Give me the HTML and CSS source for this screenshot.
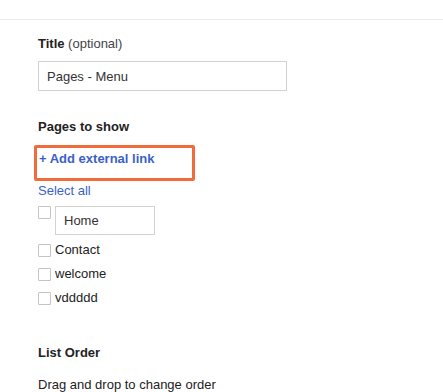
FILE: index.html
```html
<!DOCTYPE html>
<html lang="en">
<head>
    <meta charset="UTF-8">
    <meta name="viewport" content="width=device-width, initial-scale=1.0">
    <title>Pages - Configure</title>
    <link rel="stylesheet" href="styles.css">
</head>
<body>
    <div class="topbar"></div>
    <div class="content">
        <div class="field-label"><b>Title</b> (optional)</div>
        <input type="text" class="title-input" value="Pages - Menu">

        <div class="section-title">Pages to show</div>
        <div class="add-link-box">
            <a href="#" class="add-link">+ Add external link</a>
        </div>
        <a href="#" class="select-all">Select all</a>

        <div class="page-list">
            <div class="page-row page-row-edit">
                <input type="checkbox" class="check">
                <input type="text" class="page-input" value="Home">
            </div>
            <label class="page-row"><input type="checkbox" class="check">Contact</label>
            <label class="page-row"><input type="checkbox" class="check">welcome</label>
            <label class="page-row"><input type="checkbox" class="check">vddddd</label>
        </div>

        <div class="section-title list-order">List Order</div>
        <div class="hint">Drag and drop to change order</div>
    </div>
</body>
</html>
```

FILE: styles.css
```css
:root {
    --text-color: #222;
    --muted-text: #444;
    --link-color: #3a5fcd;
    --border-color: #d3d3d3;
    --highlight-color: #f26b3a;
}
body {
    margin: 0;
    background: #fff;
    color: var(--text-color);
    font-family: Arial, "Liberation Sans", sans-serif;
    font-size: 13px;
    line-height: 16px;
}
.topbar {
    height: 19px;
    border-bottom: 1px solid #ebebeb;
}
.content {
    padding: 16px 38px 0;
    display: flex;
    flex-direction: column;
    align-items: flex-start;
}
.field-label {
    color: var(--muted-text);
}
.field-label b {
    color: var(--text-color);
}
.title-input {
    margin: 9px 0 0;
    width: 249px;
    height: 30px;
    box-sizing: border-box;
    padding: 0 8px;
    border: 1px solid var(--border-color);
    font-family: inherit;
    font-size: 13px;
    color: #333;
    outline: none;
}
.section-title {
    font-weight: bold;
    margin-top: 28px;
}
.add-link-box {
    margin: 10px 0 0 -4px;
    padding: 3px 38px 11px 2px;
    border: 3px solid var(--highlight-color);
    border-radius: 2px;
}
.add-link {
    color: var(--link-color);
    font-weight: bold;
    text-decoration: none;
}
.select-all {
    margin-top: 2px;
    color: var(--link-color);
    text-decoration: none;
}
.page-list {
    margin-top: 7px;
    display: flex;
    flex-direction: column;
    gap: 8px;
}
.page-row {
    display: flex;
    align-items: center;
    gap: 4px;
    height: 16px;
}
.page-row-edit {
    align-items: flex-start;
    height: auto;
    margin-bottom: -1px;
}
.check {
    appearance: none;
    margin: 0;
    width: 13px;
    height: 13px;
    border: 1px solid #c4c4c4;
    border-radius: 1px;
    background: #fff;
    flex-shrink: 0;
}
.page-input {
    width: 100px;
    height: 29px;
    box-sizing: border-box;
    padding: 0 8px;
    border: 1px solid var(--border-color);
    font-family: inherit;
    font-size: 13px;
    color: #333;
    outline: none;
}
.list-order {
    margin-top: 39px;
}
.hint {
    margin-top: 16px;
}
```
